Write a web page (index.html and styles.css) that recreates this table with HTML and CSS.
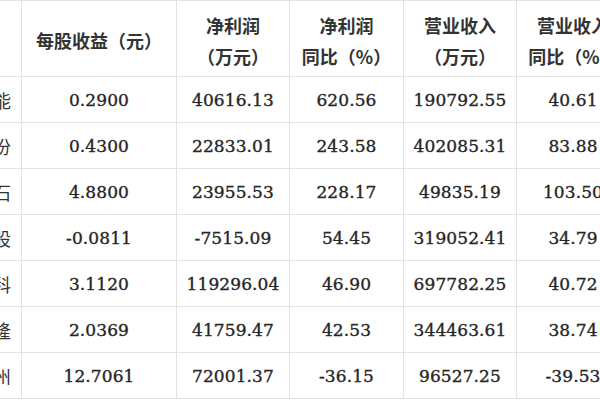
FILE: index.html
```html
<!DOCTYPE html>
<html lang="zh-CN">
<head>
<meta charset="utf-8">
<title>业绩表</title>
<link rel="stylesheet" href="styles.css">
</head>
<body>
<div class="sheet">
  <div class="cell head name"></div>
  <div class="cell head"><span>每股收益（元）</span></div>
  <div class="cell head"><span>净利润<br>（万元）</span></div>
  <div class="cell head"><span>净利润<br>同比（%）</span></div>
  <div class="cell head"><span>营业收入<br>（万元）</span></div>
  <div class="cell head"><span>营业收入<br>同比（%）</span></div>

  <div class="cell name"><span>能</span></div>
  <div class="cell num">0.2900</div>
  <div class="cell num">40616.13</div>
  <div class="cell num">620.56</div>
  <div class="cell num">190792.55</div>
  <div class="cell num">40.61</div>

  <div class="cell name"><span>份</span></div>
  <div class="cell num">0.4300</div>
  <div class="cell num">22833.01</div>
  <div class="cell num">243.58</div>
  <div class="cell num">402085.31</div>
  <div class="cell num">83.88</div>

  <div class="cell name"><span>石</span></div>
  <div class="cell num">4.8800</div>
  <div class="cell num">23955.53</div>
  <div class="cell num">228.17</div>
  <div class="cell num">49835.19</div>
  <div class="cell num">103.50</div>

  <div class="cell name"><span>股</span></div>
  <div class="cell num">-0.0811</div>
  <div class="cell num">-7515.09</div>
  <div class="cell num">54.45</div>
  <div class="cell num">319052.41</div>
  <div class="cell num">34.79</div>

  <div class="cell name"><span>科</span></div>
  <div class="cell num">3.1120</div>
  <div class="cell num">119296.04</div>
  <div class="cell num">46.90</div>
  <div class="cell num">697782.25</div>
  <div class="cell num">40.72</div>

  <div class="cell name"><span>隆</span></div>
  <div class="cell num">2.0369</div>
  <div class="cell num">41759.47</div>
  <div class="cell num">42.53</div>
  <div class="cell num">344463.61</div>
  <div class="cell num">38.74</div>

  <div class="cell name"><span>州</span></div>
  <div class="cell num">12.7061</div>
  <div class="cell num">72001.37</div>
  <div class="cell num">-36.15</div>
  <div class="cell num">96527.25</div>
  <div class="cell num">-39.53</div>
</div>
</body>
</html>
```

FILE: styles.css
```css
html, body {
  margin: 0;
  padding: 0;
  background: #ffffff;
  overflow: hidden;
  width: 600px;
  height: 400px;
}

.sheet {
  display: grid;
  grid-template-columns: 21px 154px 112px 113px 112px 112px;
  grid-template-rows: 75px repeat(7, 45px);
  gap: 1px;
  padding: 1px 0;
  background: #e3e3e3;
  width: 628px;
}

.cell {
  background: #ffffff;
  display: flex;
  align-items: center;
  justify-content: center;
  color: #262626;
  overflow: hidden;
  white-space: nowrap;
}

.head {
  font-family: "Noto Sans CJK SC", "Noto Sans", sans-serif;
  font-size: 18px;
  font-weight: 700;
  line-height: 31px;
  text-align: center;
  color: #333333;
  padding-top: 4px;
  box-sizing: border-box;
}

.num {
  font-family: "DejaVu Serif", "Liberation Serif", serif;
  font-size: 17px;
  letter-spacing: 0.1px;
  -webkit-text-stroke: 0.35px #262626;
}

.name {
  justify-content: flex-end;
  padding-right: 10px;
  font-family: "Noto Sans CJK SC", sans-serif;
  font-size: 18px;
  color: #333333;
}
```
